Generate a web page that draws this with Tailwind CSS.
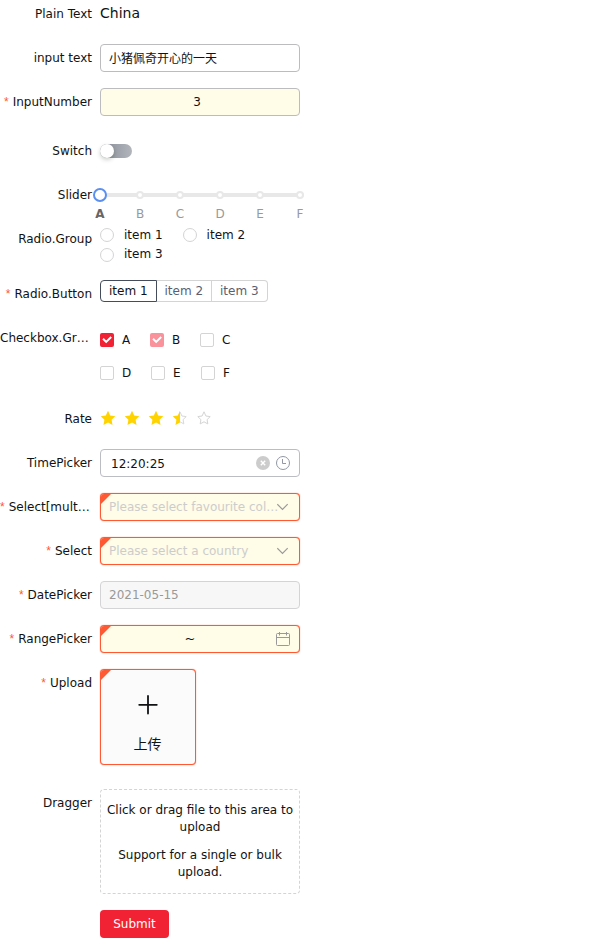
<!DOCTYPE html>
<html lang="zh">
<head>
<meta charset="utf-8">
<title>Form</title>
<script src="https://cdn.jsdelivr.net/npm/@tailwindcss/browser@4"></script>
</head>
<body class="bg-white font-['DejaVu_Sans','Noto_Sans_CJK_SC',sans-serif] text-[12px] leading-[28px] text-[#111213]">
<form class="flex h-[938px] w-[600px] flex-col overflow-hidden">

  <div class="flex h-[44px] items-start gap-2">
    <label class="w-[92px] shrink-0 whitespace-nowrap text-right">Plain Text</label>
    <span class="-mt-px text-[14px]">China</span>
  </div>

  <div class="flex h-[44px] items-start gap-2">
    <label class="w-[92px] shrink-0 whitespace-nowrap text-right">input text</label>
    <div class="h-7 w-[200px] rounded-[4px] border border-[#bcbcbe] px-2 pt-px leading-[26px]">小猪佩奇开心的一天</div>
  </div>

  <div class="flex h-[49px] items-start gap-2">
    <label class="w-[92px] shrink-0 whitespace-nowrap text-right"><span class="mr-1 font-['Liberation_Sans',sans-serif] text-[#ff5934]">*</span>InputNumber</label>
    <div class="h-7 w-[200px] rounded-[4px] border border-[#bcbcbe] bg-[#fffce8] pr-[6px] text-center leading-[26px]">3</div>
  </div>

  <div class="flex h-[44px] items-start gap-2">
    <label class="w-[92px] shrink-0 whitespace-nowrap text-right">Switch</label>
    <div class="mt-[7px] h-[14px] w-8 rounded-full bg-linear-to-r from-[#868b94] to-[#b2b5bc]">
      <div class="size-[14px] rounded-full bg-white shadow-[0_2px_4px_rgba(0,35,11,0.2)]"></div>
    </div>
  </div>

  <div class="flex h-[44px] items-start gap-2">
    <label class="w-[92px] shrink-0 whitespace-nowrap text-right">Slider</label>
    <div class="relative mt-3 h-1 w-[204px] rounded-sm bg-[#e8e8e8]">
      <div class="absolute -left-[7px] -top-[5px] z-10 size-[14px] rounded-full border-2 border-[#5b8ff0] bg-white"></div>
      <div class="absolute -top-[2px] left-[36px] flex gap-8">
        <i class="size-2 rounded-full border-2 border-[#e8e8e8] bg-white"></i>
        <i class="size-2 rounded-full border-2 border-[#e8e8e8] bg-white"></i>
        <i class="size-2 rounded-full border-2 border-[#e8e8e8] bg-white"></i>
        <i class="size-2 rounded-full border-2 border-[#e8e8e8] bg-white"></i>
        <i class="size-2 rounded-full border-2 border-[#e8e8e8] bg-white"></i>
      </div>
      <div class="absolute -left-5 top-[12px] flex text-center leading-[18px] text-[#999]">
        <span class="w-10 font-bold text-[#666]">A</span><span class="w-10">B</span><span class="w-10">C</span><span class="w-10">D</span><span class="w-10">E</span><span class="w-10">F</span>
      </div>
    </div>
  </div>

  <div class="flex h-[55px] items-start gap-2">
    <label class="w-[92px] shrink-0 whitespace-nowrap text-right">Radio.Group</label>
    <div class="grid grid-cols-[82.6px_83px] pt-px leading-[19px]">
      <span class="flex items-center gap-[10px]"><i class="-mt-px size-[14px] rounded-full border border-[#d4d4d4]"></i>item 1</span>
      <span class="flex items-center gap-[10px]"><i class="-mt-px size-[14px] rounded-full border border-[#d4d4d4]"></i>item 2</span>
      <span class="flex items-center gap-[10px]"><i class="mt-px size-[14px] rounded-full border border-[#d4d4d4]"></i>item 3</span>
    </div>
  </div>

  <div class="flex h-[44px] items-start gap-2">
    <label class="w-[92px] shrink-0 whitespace-nowrap text-right"><span class="mr-1 font-['Liberation_Sans',sans-serif] text-[#ff5934]">*</span>Radio.Button</label>
    <div class="flex h-[22px] text-left leading-5 text-[#5a6070]">
      <span class="w-[57px] rounded-l-[4px] border border-[#454c5b] pl-2 text-[#111213]">item 1</span>
      <span class="w-[55px] border-y border-r border-[#d4d4d4] pl-[7.5px]">item 2</span>
      <span class="w-[56px] rounded-r-[4px] border-y border-r border-[#d4d4d4] pl-2">item 3</span>
    </div>
  </div>

  <div class="flex h-[81px] items-start gap-2">
    <label class="w-[92px] shrink-0 whitespace-nowrap">Checkbox.Gr…</label>
    <div class="flex flex-col pt-[9px] leading-[14px]">
      <div class="flex h-[33px] items-start">
        <span class="flex w-[50px] gap-2"><i class="flex size-[14px] items-center justify-center rounded-[2px] bg-[#f02233]"><svg class="size-[14px]" viewBox="0 0 14 14" fill="none" stroke="#fff" stroke-width="2"><path d="M3 5.7 6.2 8.9 11.2 4"/></svg></i>A</span>
        <span class="flex w-[50px] gap-2"><i class="flex size-[14px] items-center justify-center rounded-[2px] bg-[#f9929b]"><svg class="size-[14px]" viewBox="0 0 14 14" fill="none" stroke="#fff" stroke-width="2"><path d="M3 5.7 6.2 8.9 11.2 4"/></svg></i>B</span>
        <span class="flex gap-2"><i class="size-[14px] rounded-[2px] border border-[#d4d4d4]"></i>C</span>
      </div>
      <div class="flex items-start">
        <span class="flex w-[51px] gap-2"><i class="size-[14px] rounded-[2px] border border-[#d4d4d4]"></i>D</span>
        <span class="flex w-[50px] gap-2"><i class="size-[14px] rounded-[2px] border border-[#d4d4d4]"></i>E</span>
        <span class="flex gap-2"><i class="size-[14px] rounded-[2px] border border-[#d4d4d4]"></i>F</span>
      </div>
    </div>
  </div>

  <svg class="hidden">
    <symbol id="star" viewBox="0 0 16 16"><path d="M8 .8 10.2 5.5 15.3 6.2 11.6 9.8 12.5 15 8 12.5 3.5 15 4.4 9.8.7 6.2 5.8 5.5Z"/></symbol>
  </svg>
  <div class="flex h-[44px] items-start gap-2">
    <label class="w-[92px] shrink-0 whitespace-nowrap text-right">Rate</label>
    <div class="flex gap-2 pt-[5px] text-[#ffd300]">
      <svg class="size-4 fill-current"><use href="#star"/></svg>
      <svg class="size-4 fill-current"><use href="#star"/></svg>
      <svg class="size-4 fill-current"><use href="#star"/></svg>
      <svg class="size-4" viewBox="0 0 16 16"><path d="M8 1.8 9.9 6 14.2 6.6 11.1 9.6 11.8 13.9 8 11.8" fill="none" stroke="#d8d8d8"/><path fill="#ffd300" d="M8 .8V12.5L3.5 15 4.4 9.8.7 6.2 5.8 5.5Z"/></svg>
      <svg class="size-4" viewBox="0 0 16 16" fill="none" stroke="#d4d4d4"><path d="M8 1.8 9.9 6 14.2 6.6 11.1 9.6 11.8 13.9 8 11.8 4.2 13.9 4.9 9.6 1.8 6.6 6.1 6Z"/></svg>
    </div>
  </div>

  <div class="flex h-[44px] items-start gap-2">
    <label class="w-[92px] shrink-0 whitespace-nowrap text-right">TimePicker</label>
    <div class="flex h-7 w-[200px] items-center rounded-[4px] border border-[#bcbcc4] pl-[10px] pr-[9px]">
      <span class="flex-1 pt-[2px] leading-[26px]">12:20:25</span>
      <svg class="mr-[6px] size-[14px]" viewBox="0 0 14 14"><circle cx="7" cy="7" r="7" fill="#ccc"/><path d="m4.8 4.8 4.4 4.4m0-4.4L4.8 9.2" stroke="#fff" stroke-width="1.4"/></svg>
      <svg class="size-[14px]" viewBox="0 0 14 14" fill="none" stroke="#9297a3"><circle cx="7" cy="7" r="6.5"/><path d="M6.5 3v4.5H10"/></svg>
    </div>
  </div>

  <div class="flex h-[44px] items-start gap-2">
    <label class="w-[92px] shrink-0 whitespace-nowrap"><span class="mr-1 font-['Liberation_Sans',sans-serif] text-[#ff5934]">*</span>Select[mult…</label>
    <div class="relative flex h-7 w-[200px] items-center rounded-[4px] border border-[#ff5934] bg-[#fffce8] pl-2 pr-[10px] shadow-[0_0_1px_#ff5934]">
      <i class="absolute left-0 top-0 size-[10px] rounded-tl-[3px] bg-[#ff5934] [clip-path:polygon(0_0,100%_0,0_100%)]"></i>
      <span class="w-[168px] shrink-0 whitespace-nowrap leading-[26px] text-[#ccc]">Please select favourite col…</span>
      <svg class="size-3 shrink-0" viewBox="0 0 12 12" fill="none" stroke="#999" stroke-width="1.2"><path d="m.3 3.2 5.2 5.2 5.2-5.2"/></svg>
    </div>
  </div>

  <div class="flex h-[44px] items-start gap-2">
    <label class="w-[92px] shrink-0 whitespace-nowrap text-right"><span class="mr-1 font-['Liberation_Sans',sans-serif] text-[#ff5934]">*</span>Select</label>
    <div class="relative flex h-7 w-[200px] items-center rounded-[4px] border border-[#ff5934] bg-[#fffce8] pl-2 pr-[10px] shadow-[0_0_1px_#ff5934]">
      <i class="absolute left-0 top-0 size-[10px] rounded-tl-[3px] bg-[#ff5934] [clip-path:polygon(0_0,100%_0,0_100%)]"></i>
      <span class="w-[168px] shrink-0 whitespace-nowrap leading-[26px] text-[#ccc]">Please select a country</span>
      <svg class="size-3 shrink-0" viewBox="0 0 12 12" fill="none" stroke="#999" stroke-width="1.2"><path d="m.3 3.2 5.2 5.2 5.2-5.2"/></svg>
    </div>
  </div>

  <div class="flex h-[44px] items-start gap-2">
    <label class="w-[92px] shrink-0 whitespace-nowrap text-right"><span class="mr-1 font-['Liberation_Sans',sans-serif] text-[#ff5934]">*</span>DatePicker</label>
    <div class="h-7 w-[200px] rounded-[4px] border border-[#d4d4d6] bg-[#f7f7f7] px-2 leading-[26px] text-[#999]">2021-05-15</div>
  </div>

  <div class="flex h-[44px] items-start gap-2">
    <label class="w-[92px] shrink-0 whitespace-nowrap text-right"><span class="mr-1 font-['Liberation_Sans',sans-serif] text-[#ff5934]">*</span>RangePicker</label>
    <div class="relative flex h-7 w-[200px] items-center rounded-[4px] border border-[#ff5934] bg-[#fffce8] pl-[3px] pr-[9px] shadow-[0_0_1px_#ff5934]">
      <i class="absolute left-0 top-0 size-[10px] rounded-tl-[3px] bg-[#ff5934] [clip-path:polygon(0_0,100%_0,0_100%)]"></i>
      <span class="flex-1 text-center text-[13px] leading-[26px]">~</span>
      <svg class="size-[14px]" viewBox="0 0 14 14" fill="none" stroke="#999"><rect x=".5" y="1.5" width="13" height="12" rx="1"/><path d="M.5 5.5h13M3.5 0v3.5M10.5 0v3.5"/></svg>
    </div>
  </div>

  <div class="flex h-[120px] items-start gap-2">
    <label class="w-[92px] shrink-0 whitespace-nowrap text-right"><span class="mr-1 font-['Liberation_Sans',sans-serif] text-[#ff5934]">*</span>Upload</label>
    <div class="relative flex size-24 flex-col items-center rounded-[4px] border border-[#ff5934] bg-[#fbfbfb] pr-px pt-[25px] shadow-[0_0_1px_#ff5934]">
      <i class="absolute left-0 top-0 size-[10px] rounded-tl-[3px] bg-[#ff5934] [clip-path:polygon(0_0,100%_0,0_100%)]"></i>
      <svg class="size-5" viewBox="0 0 20 20" fill="none" stroke="#111213" stroke-width="1.8" stroke-linecap="round"><path d="M10 1v17.6M1.2 9.8h17.6"/></svg>
      <span class="mt-[15px] text-[14px] leading-[28px]">上传</span>
    </div>
  </div>

  <div class="flex h-[121px] items-start gap-2">
    <label class="w-[92px] shrink-0 whitespace-nowrap text-right">Dragger</label>
    <div class="h-[105px] w-[200px] rounded-[4px] border border-dashed border-[#d4d4d4] pt-3 text-center leading-[17px]">
      <p class="mb-[11px]">Click or drag file to this area to upload</p>
      <p>Support for a single or bulk upload.</p>
    </div>
  </div>

  <div class="flex pl-[100px]">
    <button type="button" class="h-7 w-[69px] rounded-[4px] bg-[#f02233] leading-[28px] text-white">Submit</button>
  </div>
</form>
</body>
</html>
